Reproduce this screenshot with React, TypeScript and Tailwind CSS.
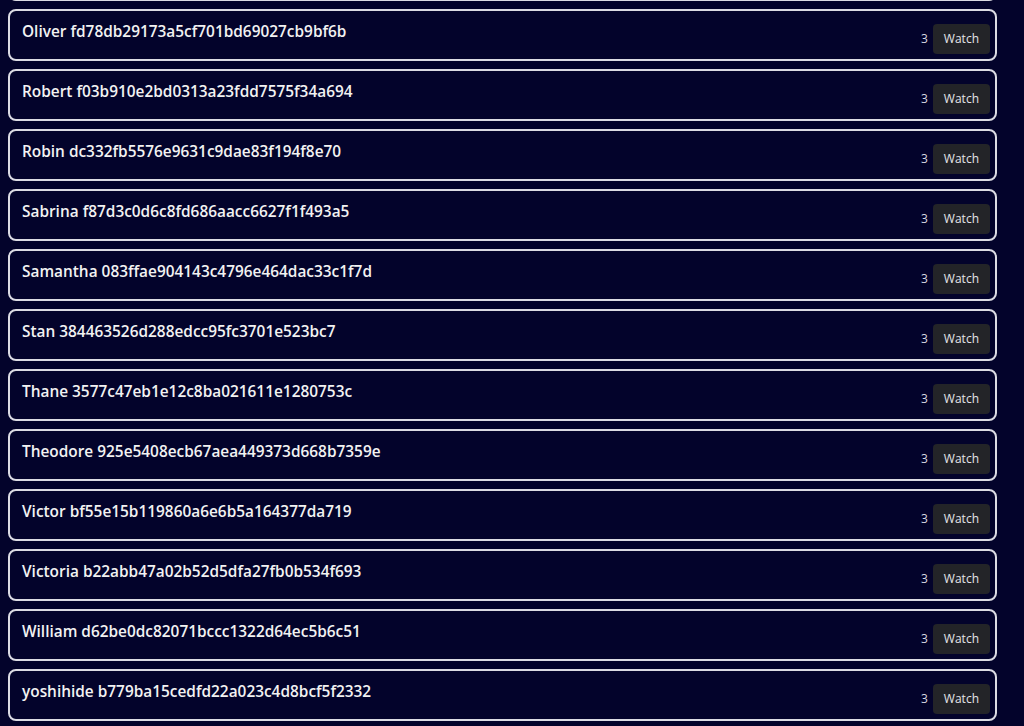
const users: [string, string][] = [
  ["Oliver", "fd78db29173a5cf701bd69027cb9bf6b"],
  ["Robert", "f03b910e2bd0313a23fdd7575f34a694"],
  ["Robin", "dc332fb5576e9631c9dae83f194f8e70"],
  ["Sabrina", "f87d3c0d6c8fd686aacc6627f1f493a5"],
  ["Samantha", "083ffae904143c4796e464dac33c1f7d"],
  ["Stan", "384463526d288edcc95fc3701e523bc7"],
  ["Thane", "3577c47eb1e12c8ba021611e1280753c"],
  ["Theodore", "925e5408ecb67aea449373d668b7359e"],
  ["Victor", "bf55e15b119860a6e6b5a164377da719"],
  ["Victoria", "b22abb47a02b52d5dfa27fb0b534f693"],
  ["William", "d62be0dc82071bccc1322d64ec5b6c51"],
  ["yoshihide", "b779ba15cedfd22a023c4d8bcf5f2332"],
];

function UserRow({ name, id }: { name: string; id: string }) {
  return (
    <div className="flex h-[52px] items-start justify-between rounded-lg border-2 border-[#dcdce4] pl-3 pr-[5px]">
      <div className="mt-[10px] text-[15.4px] font-semibold leading-[22px] text-[#f2f2f2]">
        {name} {id}
      </div>
      <div className="mt-[13px] flex items-center gap-[5px]">
        <span className="text-[12px] text-[#d8d8e0]">3</span>
        <button className="h-[30px] rounded bg-[#232428] px-[11px] text-[12px] text-[#e4e4e8]">
          Watch
        </button>
      </div>
    </div>
  );
}

export default function App() {
  return (
    <div
      className="h-[726px] overflow-hidden bg-[#03032b]"
      style={{ fontFamily: "'Open Sans', 'Noto Sans', sans-serif" }}
    >
      <div className="-mt-[51px] flex w-[997px] flex-col gap-2 pl-2">
        {/* previous row, scrolled out of view */}
        <div className="h-[52px] rounded-lg border-2 border-[#dcdce4]" />
        {users.map(([name, id]) => (
          <UserRow key={name} name={name} id={id} />
        ))}
      </div>
    </div>
  );
}
